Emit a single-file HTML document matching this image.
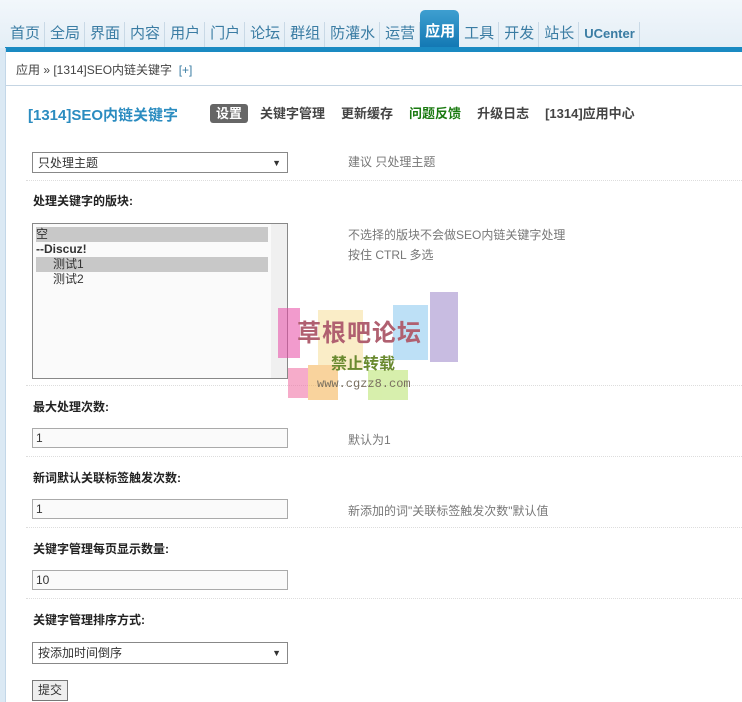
<!DOCTYPE html>
<html><head><meta charset="utf-8"><style>
body{margin:0;width:742px;height:702px;overflow:hidden;background:#fff;font-family:"Liberation Sans","Noto Sans CJK SC",sans-serif;font-size:12px;color:#333;position:relative}
.top{position:absolute;left:0;top:0;width:742px;height:48px;background:linear-gradient(#f2f7fb,#e4eef6)}
.nav{position:absolute;left:5px;top:20px;height:28px;display:flex;font-size:15px;color:#3a7ca3}
.nav span{padding:0 4px 0 5px;line-height:24px;border-right:1px solid #c9d9e6;margin-top:2px}
.nav span.on{background:linear-gradient(#3e9fd0,#1277b3);color:#fff;font-weight:bold;border-radius:5px 5px 0 0;margin-top:-10px;padding-top:10px;line-height:24px;border:none}
.blue{position:absolute;left:5px;top:47px;width:737px;height:5px;background:#1a8ac2}
.strip{position:absolute;left:0;top:48px;width:5px;height:654px;background:#dbe9f4;border-right:1px solid #c3d7e8}
.bc{position:absolute;left:6px;top:52px;width:736px;height:33px;background:#fff;border-bottom:1px solid #c5d5e3;line-height:37px;font-size:12px;color:#444}
.title{position:absolute;left:28px;top:104px;font-size:15px;font-weight:bold;color:#2b8cc0}
.tabs{position:absolute;left:210px;top:104px;font-size:13px;font-weight:bold;color:#444;display:flex;gap:0}
.tabs span{margin-right:16px;line-height:19px}
.tabs .on{background:#666;color:#fff;border-radius:3px;padding:0 6px;margin-right:12px}
.a{position:absolute}
.lbl{position:absolute;left:33px;font-weight:bold;font-size:12px;color:#222}
.tip{position:absolute;left:348px;color:#777;font-size:12px}
.dot{position:absolute;left:26px;width:716px;border-top:1px dotted #ddd}
.inp{position:absolute;left:32px;width:251px;height:18px;border:1px solid #aaa;background:#fafafa;line-height:18px;padding-left:3px;box-sizing:content-box;font-size:12px}
.sel{border:1px solid #888;background:#fff;height:19px;line-height:20px;padding-left:5px;width:249px}
.sel:after{content:"▼";position:absolute;right:6px;top:0;font-size:9px}
</style></head><body>
<div class="top"></div>
<div class="nav"><span>首页</span><span>全局</span><span>界面</span><span>内容</span><span>用户</span><span>门户</span><span>论坛</span><span>群组</span><span>防灌水</span><span>运营</span><span class="on">应用</span><span>工具</span><span>开发</span><span>站长</span><span style="font-size:13px;font-weight:bold">UCenter</span></div>
<div class="blue"></div>
<div class="strip"></div>
<div class="bc">&nbsp;&nbsp;&nbsp;应用 » [1314]SEO内链关键字 &nbsp;<span style="color:#3a7ca3">[+]</span></div>
<div class="title">[1314]SEO内链关键字</div>
<div class="tabs"><span class="on">设置</span><span>关键字管理</span><span>更新缓存</span><span style="color:#1a7a10">问题反馈</span><span>升级日志</span><span>[1314]应用中心</span></div>

<div class="inp sel" style="top:152px">只处理主题</div>
<div class="tip" style="top:153px">建议 只处理主题</div>
<div class="dot" style="top:180px"></div>
<div class="lbl" style="top:192px">处理关键字的版块:</div>
<div class="a" style="left:32px;top:223px;width:254px;height:154px;border:1px solid #888;background:#fafafa">
 <div style="position:absolute;left:3px;top:3px;width:232px;line-height:15px;font-size:12px">
  <div style="background:#c8c8c8">空</div>
  <div style="font-weight:bold">--Discuz!</div>
  <div style="background:#c8c8c8;padding-left:17px">测试1</div>
  <div style="padding-left:17px">测试2</div>
 </div>
 <div style="position:absolute;right:0;top:0;width:16px;height:154px;background:#f0f0f0"></div>
</div>
<div class="tip" style="top:225px;line-height:20px">不选择的版块不会做SEO内链关键字处理<br>按住 CTRL 多选</div>
<div class="dot" style="top:385px"></div>

<div class="a" style="left:278px;top:300px;width:180px;height:105px;opacity:.55">
 <div class="a" style="left:0;top:8px;width:22px;height:50px;background:#e84aa6"></div>
 <div class="a" style="left:40px;top:10px;width:45px;height:60px;background:#f6e09a"></div>
 <div class="a" style="left:115px;top:5px;width:35px;height:55px;background:#88c8ef"></div>
 <div class="a" style="left:152px;top:-8px;width:28px;height:70px;background:#9c86c9"></div>
 <div class="a" style="left:30px;top:65px;width:30px;height:35px;background:#f5b04e"></div>
 <div class="a" style="left:90px;top:70px;width:40px;height:30px;background:#b7e26a"></div>
 <div class="a" style="left:10px;top:68px;width:20px;height:30px;background:#f06aa0"></div>
</div>
<div class="a" style="left:297px;top:313px;font-size:24px;font-weight:bold;color:#b06070;letter-spacing:1px">草根吧论坛</div>
<div class="a" style="left:331px;top:350px;font-size:16px;font-weight:bold;color:#6a8a30">禁止转载</div>
<div class="a" style="left:317px;top:377px;font-size:12px;color:#7a7060;font-family:'Liberation Mono',monospace">www.cgzz8.com</div>

<div class="lbl" style="top:398px">最大处理次数:</div>
<div class="inp" style="top:428px">1</div>
<div class="tip" style="top:431px">默认为1</div>
<div class="dot" style="top:456px"></div>
<div class="lbl" style="top:469px">新词默认关联标签触发次数:</div>
<div class="inp" style="top:499px">1</div>
<div class="tip" style="top:502px">新添加的词"关联标签触发次数"默认值</div>
<div class="dot" style="top:527px"></div>
<div class="lbl" style="top:540px">关键字管理每页显示数量:</div>
<div class="inp" style="top:570px">10</div>
<div class="dot" style="top:598px"></div>
<div class="lbl" style="top:611px">关键字管理排序方式:</div>
<div class="inp sel" style="top:642px;height:20px">按添加时间倒序</div>
<div class="a" style="left:32px;top:680px;width:34px;height:19px;border:1px solid #777;background:#eee;text-align:center;line-height:19px">提交</div>
</body></html>
